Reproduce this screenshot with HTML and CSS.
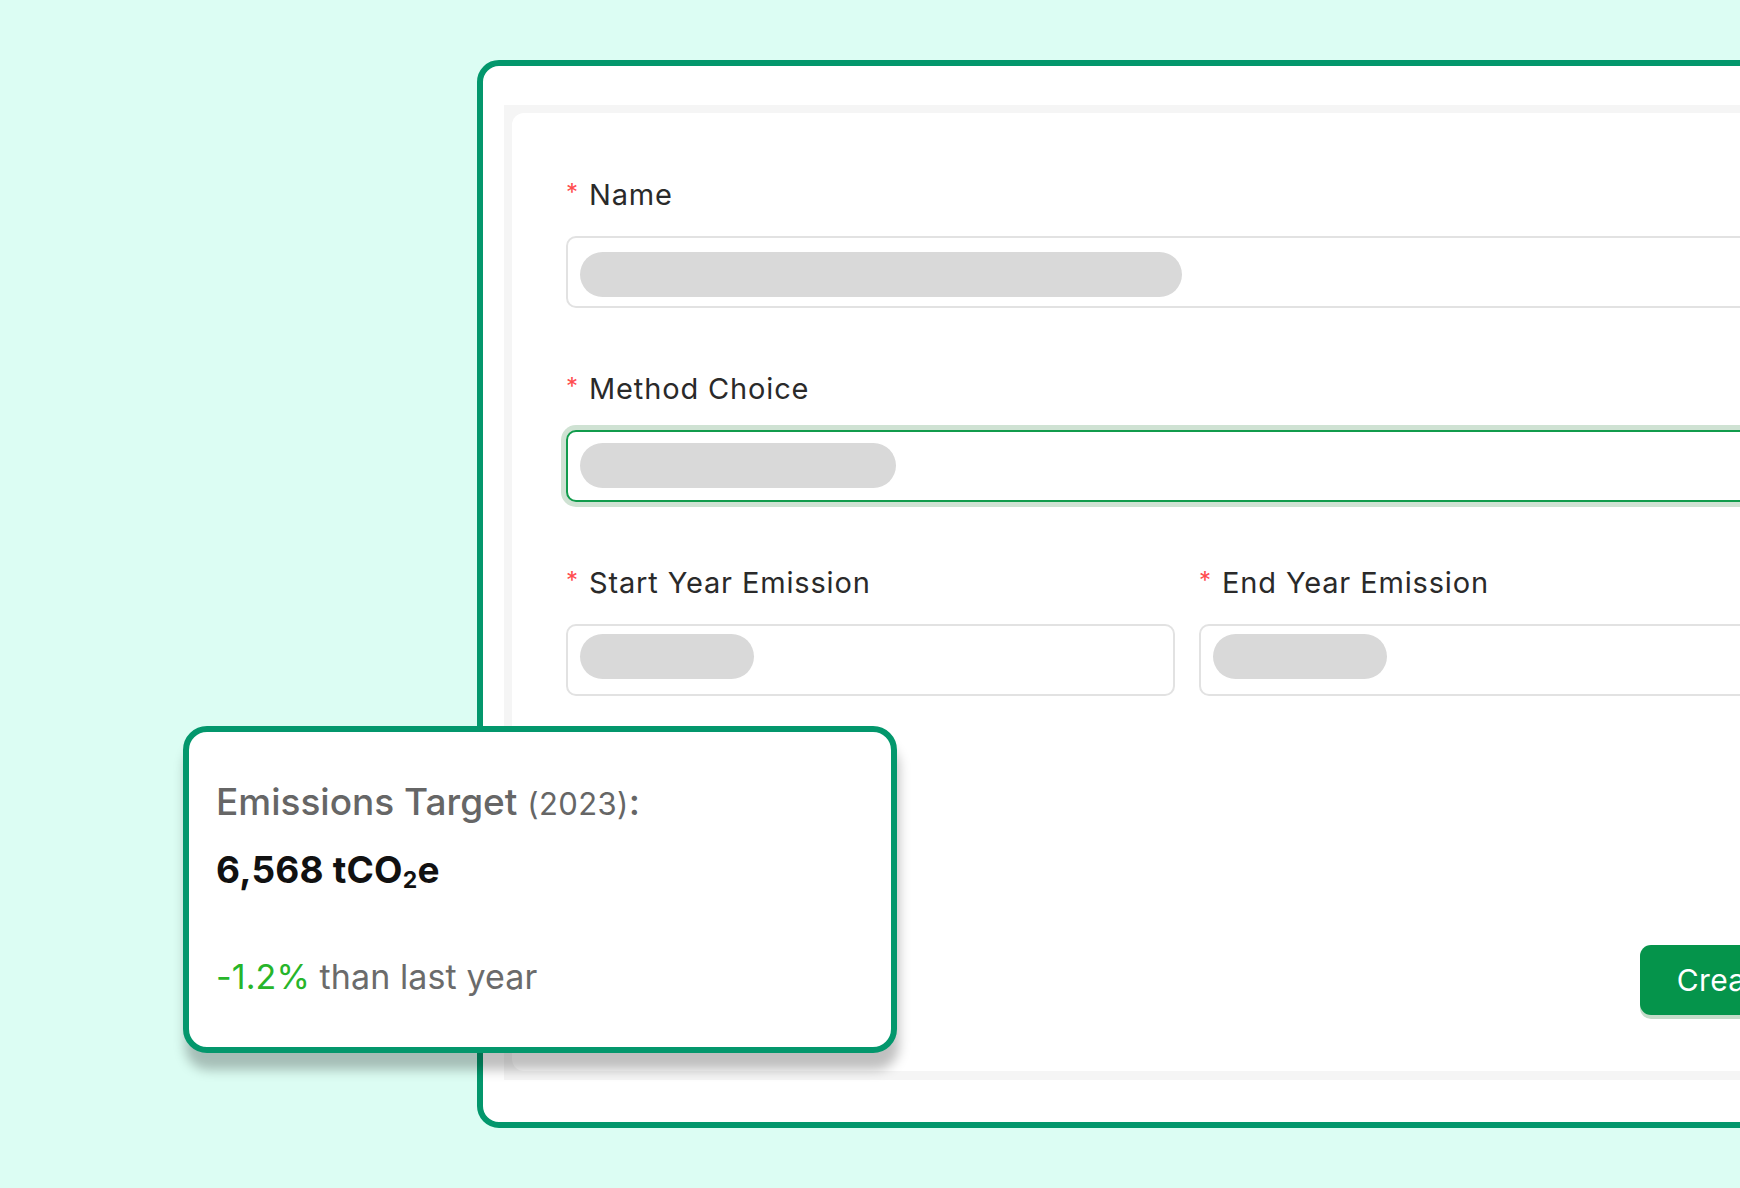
FILE: index.html
```html
<!DOCTYPE html>
<html lang="en">
<head>
<meta charset="utf-8">
<title>Emissions Target Form</title>
<link rel="stylesheet" href="styles.css">
</head>
<body>
<div class="stage">
  <div class="frame">
    <div class="panel">
      <div class="card">
        <div class="form">
          <div class="field">
            <div class="label"><span class="req">*</span>Name</div>
            <div class="input"><span class="pill pill-name"></span></div>
          </div>
          <div class="field">
            <div class="label"><span class="req">*</span>Method Choice</div>
            <div class="input input-focus"><span class="pill pill-method"></span></div>
          </div>
          <div class="row">
            <div class="field">
              <div class="label"><span class="req">*</span>Start Year Emission</div>
              <div class="input"><span class="pill pill-year"></span></div>
            </div>
            <div class="field">
              <div class="label"><span class="req">*</span>End Year Emission</div>
              <div class="input"><span class="pill pill-year"></span></div>
            </div>
          </div>
        </div>
        <div class="actions">
          <button class="btn">Create</button>
        </div>
      </div>
    </div>
  </div>

  <div class="target">
    <div class="target-title">Emissions Target <span class="year">(2023)</span>:</div>
    <div class="target-value">6,568 tCO<sub>2</sub>e</div>
    <div class="target-delta"><span class="delta">-1.2%</span> than last year</div>
  </div>
</div>
</body>
</html>
```

FILE: styles.css
```css
html, body {
  margin: 0;
  padding: 0;
  overflow: hidden;
}

body {
  width: 1740px;
  height: 1188px;
  background: #dcfdf3;
  font-family: Inter, "Noto Sans", "Liberation Sans", sans-serif;
}

.stage {
  position: relative;
  width: 1740px;
  height: 1188px;
  overflow: hidden;
}

.frame {
  margin: 60px 0 0 477px;
  width: 1420px;
  height: 1068px;
  box-sizing: border-box;
  border: 6px solid #03976c;
  border-radius: 22px;
  background: #ffffff;
  padding: 39px 0 0 21px;
}

.panel {
  width: 1366px;
  height: 975px;
  box-sizing: border-box;
  background: #f5f5f5;
  padding: 8px;
}

.card {
  height: 958px;
  box-sizing: border-box;
  background: #ffffff;
  border-radius: 12px;
  padding: 62px 54px 56px;
  display: flex;
  flex-direction: column;
}

.form {
  width: 1242px;
  display: flex;
  flex-direction: column;
  gap: 61px;
}

.row {
  display: grid;
  grid-template-columns: 1fr 1fr;
  gap: 24px;
}

.label {
  height: 40px;
  line-height: 40px;
  font-size: 29px;
  letter-spacing: 0.85px;
  color: #2a2a2a;
  margin-bottom: 21px;
  white-space: nowrap;
}

.req {
  display: inline-block;
  width: 23px;
  letter-spacing: 0;
  color: #ff4d4f;
  font-size: 24px;
  line-height: 1;
  vertical-align: 4px;
}

.input {
  height: 72px;
  box-sizing: border-box;
  border: 2px solid #e2e2e2;
  border-radius: 10px;
  background: #fff;
  display: flex;
  align-items: center;
  padding-left: 12px;
}

.input-focus {
  border-color: #119c4c;
  box-shadow: 0 0 0 5px #cfe2d3;
}

.pill {
  display: block;
  height: 45px;
  border-radius: 23px;
  background: #d9d9d9;
}

.pill-name { width: 602px; margin-top: 4px; }
.pill-method { width: 316px; margin-bottom: 1px; }
.pill-year { width: 174px; margin-bottom: 7px; }

.actions {
  margin-top: auto;
  display: flex;
  justify-content: flex-end;
  width: 1244px;
}

.btn {
  height: 70px;
  padding: 0 37px;
  border: none;
  border-radius: 11px;
  background: #05944b;
  color: #ffffff;
  font-family: Inter, "Noto Sans", "Liberation Sans", sans-serif;
  font-size: 30px;
  letter-spacing: 0.3px;
  box-shadow: 0 4px 0 #c4dcc9;
}

.target {
  position: absolute;
  left: 183px;
  top: 726px;
  width: 714px;
  height: 327px;
  box-sizing: border-box;
  border: 6px solid #03976c;
  border-radius: 24px;
  background: #ffffff;
  box-shadow: 2px 17px 12px rgba(0, 0, 0, 0.25);
  padding: 47px 0 0 27px;
}

.target-title {
  font-size: 37px;
  line-height: 46px;
  font-weight: 500;
  color: #666666;
  white-space: nowrap;
}

.year {
  font-size: 31px;
  font-weight: 400;
  letter-spacing: 0.4px;
}

.target-value {
  margin-top: 20px;
  font-size: 37px;
  line-height: 46px;
  font-weight: 700;
  color: #111111;
  letter-spacing: 0.2px;
}

.target-value sub {
  font-size: 23px;
  vertical-align: -5px;
  line-height: 0;
}

.target-delta {
  margin-top: 63px;
  font-size: 34px;
  line-height: 42px;
  color: #6b6b6b;
  letter-spacing: 0.1px;
}

.delta {
  color: #27b52a;
}
```
